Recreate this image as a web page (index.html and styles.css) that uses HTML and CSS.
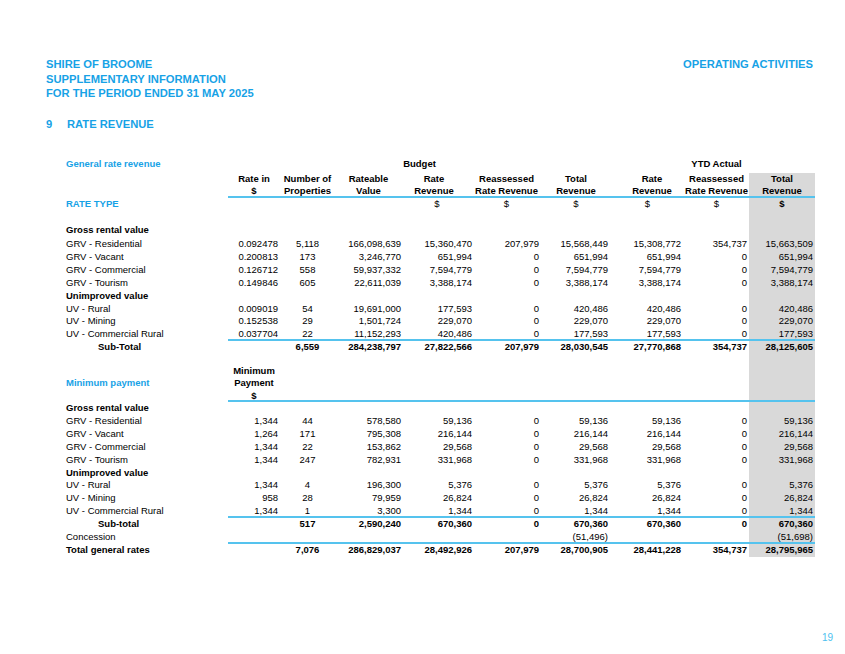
FILE: index.html
```html
<!DOCTYPE html>
<html lang="en">
<head>
<meta charset="utf-8">
<title>Shire of Broome - Rate Revenue</title>
<link rel="stylesheet" href="styles.css">
</head>
<body>
<div class="page">
  <header class="head">
    <div class="titles">
      <div>SHIRE OF BROOME</div>
      <div>SUPPLEMENTARY INFORMATION</div>
      <div>FOR THE PERIOD ENDED 31 MAY 2025</div>
    </div>
    <div class="tag">OPERATING ACTIVITIES</div>
  </header>
  <h1 class="section"><span class="num">9</span><span>RATE REVENUE</span></h1>

  <div class="table">
    <div class="row hd">
      <div class="blue">General rate revenue</div><div class="span-budget">Budget</div><div></div><div>YTD Actual</div><div></div>
    </div>
    <div class="row hd">
      <div></div><div>Rate in</div><div>Number of</div><div>Rateable</div><div>Rate</div><div>Reassessed</div><div>Total</div><div>Rate</div><div>Reassessed</div><div>Total</div>
    </div>
    <div class="row hd line">
      <div></div><div>$</div><div>Properties</div><div>Value</div><div>Revenue</div><div>Rate Revenue</div><div>Revenue</div><div>Revenue</div><div>Rate Revenue</div><div>Revenue</div>
    </div>
    <div class="row dol">
      <div class="blue">RATE TYPE</div><div></div><div></div><div></div><div>$</div><div>$</div><div>$</div><div>$</div><div>$</div><div class="b">$</div>
    </div>
    <div class="row"><div></div><div></div><div></div><div></div><div></div><div></div><div></div><div></div><div></div><div></div></div>
    <div class="row"><div class="b">Gross rental value</div><div></div><div></div><div></div><div></div><div></div><div></div><div></div><div></div><div></div></div>
    <div class="row"><div>GRV - Residential</div><div>0.092478</div><div>5,118</div><div>166,098,639</div><div>15,360,470</div><div>207,979</div><div>15,568,449</div><div>15,308,772</div><div>354,737</div><div>15,663,509</div></div>
    <div class="row"><div>GRV - Vacant</div><div>0.200813</div><div>173</div><div>3,246,770</div><div>651,994</div><div>0</div><div>651,994</div><div>651,994</div><div>0</div><div>651,994</div></div>
    <div class="row"><div>GRV - Commercial</div><div>0.126712</div><div>558</div><div>59,937,332</div><div>7,594,779</div><div>0</div><div>7,594,779</div><div>7,594,779</div><div>0</div><div>7,594,779</div></div>
    <div class="row"><div>GRV - Tourism</div><div>0.149846</div><div>605</div><div>22,611,039</div><div>3,388,174</div><div>0</div><div>3,388,174</div><div>3,388,174</div><div>0</div><div>3,388,174</div></div>
    <div class="row"><div class="b">Unimproved value</div><div></div><div></div><div></div><div></div><div></div><div></div><div></div><div></div><div></div></div>
    <div class="row"><div>UV - Rural</div><div>0.009019</div><div>54</div><div>19,691,000</div><div>177,593</div><div>0</div><div>420,486</div><div>420,486</div><div>0</div><div>420,486</div></div>
    <div class="row"><div>UV - Mining</div><div>0.152538</div><div>29</div><div>1,501,724</div><div>229,070</div><div>0</div><div>229,070</div><div>229,070</div><div>0</div><div>229,070</div></div>
    <div class="row line"><div>UV - Commercial Rural</div><div>0.037704</div><div>22</div><div>11,152,293</div><div>420,486</div><div>0</div><div>177,593</div><div>177,593</div><div>0</div><div>177,593</div></div>
    <div class="row b"><div class="sub">Sub-Total</div><div></div><div>6,559</div><div>284,238,797</div><div>27,822,566</div><div>207,979</div><div>28,030,545</div><div>27,770,868</div><div>354,737</div><div>28,125,605</div></div>
    <div class="row"><div></div><div></div><div></div><div></div><div></div><div></div><div></div><div></div><div></div><div></div></div>
    <div class="row hd"><div></div><div>Minimum</div><div></div><div></div><div></div><div></div><div></div><div></div><div></div><div></div></div>
    <div class="row hd"><div class="blue">Minimum payment</div><div>Payment</div><div></div><div></div><div></div><div></div><div></div><div></div><div></div><div></div></div>
    <div class="row hd line"><div></div><div>$</div><div></div><div></div><div></div><div></div><div></div><div></div><div></div><div></div></div>
    <div class="row"><div class="b">Gross rental value</div><div></div><div></div><div></div><div></div><div></div><div></div><div></div><div></div><div></div></div>
    <div class="row"><div>GRV - Residential</div><div>1,344</div><div>44</div><div>578,580</div><div>59,136</div><div>0</div><div>59,136</div><div>59,136</div><div>0</div><div>59,136</div></div>
    <div class="row"><div>GRV - Vacant</div><div>1,264</div><div>171</div><div>795,308</div><div>216,144</div><div>0</div><div>216,144</div><div>216,144</div><div>0</div><div>216,144</div></div>
    <div class="row"><div>GRV - Commercial</div><div>1,344</div><div>22</div><div>153,862</div><div>29,568</div><div>0</div><div>29,568</div><div>29,568</div><div>0</div><div>29,568</div></div>
    <div class="row"><div>GRV - Tourism</div><div>1,344</div><div>247</div><div>782,931</div><div>331,968</div><div>0</div><div>331,968</div><div>331,968</div><div>0</div><div>331,968</div></div>
    <div class="row"><div class="b">Unimproved value</div><div></div><div></div><div></div><div></div><div></div><div></div><div></div><div></div><div></div></div>
    <div class="row"><div>UV - Rural</div><div>1,344</div><div>4</div><div>196,300</div><div>5,376</div><div>0</div><div>5,376</div><div>5,376</div><div>0</div><div>5,376</div></div>
    <div class="row"><div>UV - Mining</div><div>958</div><div>28</div><div>79,959</div><div>26,824</div><div>0</div><div>26,824</div><div>26,824</div><div>0</div><div>26,824</div></div>
    <div class="row line"><div>UV - Commercial Rural</div><div>1,344</div><div>1</div><div>3,300</div><div>1,344</div><div>0</div><div>1,344</div><div>1,344</div><div>0</div><div>1,344</div></div>
    <div class="row b"><div class="sub">Sub-total</div><div></div><div>517</div><div>2,590,240</div><div>670,360</div><div>0</div><div>670,360</div><div>670,360</div><div>0</div><div>670,360</div></div>
    <div class="row line"><div>Concession</div><div></div><div></div><div></div><div></div><div></div><div>(51,496)</div><div></div><div></div><div>(51,698)</div></div>
    <div class="row b"><div>Total general rates</div><div></div><div>7,076</div><div>286,829,037</div><div>28,492,926</div><div>207,979</div><div>28,700,905</div><div>28,441,228</div><div>354,737</div><div>28,795,965</div></div>
  </div>

  <footer class="pageno">19</footer>
</div>
</body>
</html>
```

FILE: styles.css
```css
* { box-sizing: border-box; }

html, body {
  margin: 0;
  padding: 0;
  background: #ffffff;
}

body {
  font-family: "Liberation Sans", Arial, sans-serif;
  color: #000000;
  width: 845px;
  height: 654px;
  overflow: hidden;
}

.page {
  padding: 57px 32px 0 46px;
}

.head {
  display: flex;
  justify-content: space-between;
  align-items: flex-start;
  font-size: 11.2px;
  line-height: 14.5px;
  font-weight: bold;
  color: #17a2e6;
}

.section {
  display: flex;
  margin: 16.8px 0 0 0;
  font-size: 11.2px;
  line-height: 14.5px;
  font-weight: bold;
  color: #17a2e6;
}

.section .num {
  width: 21px;
}

.table {
  margin: 26.6px 0 0 20px;
  width: 749px;
  display: grid;
  grid-template-columns: 162px 52px 55px 67px 70px 69px 70px 73px 65px 66px;
  grid-template-rows:
    14.3px 12.7px 12.7px 13.2px 13.2px 13.2px
    13px 13px 13px 13px 13px 12.5px 12.5px 13.7px
    12px 12px 11.7px 12.6px 12.4px 13px
    12.9px 12.9px 12.9px 12.9px 12.9px 12.9px 12.9px 12.3px
    13px 13px 13.1px;
  font-size: 9.5px;
  line-height: 12.84px;
  background-image: linear-gradient(#d9d9d9, #d9d9d9);
  background-repeat: no-repeat;
  background-position: 683px 14.3px;
  background-size: 66px calc(100% - 14.3px);
}

.row {
  display: contents;
}

.row > * {
  text-align: right;
  white-space: nowrap;
  overflow: visible;
}

.row > :nth-child(1) { text-align: left; }
.row > :nth-child(2) { padding-right: 2px; }
.row > :nth-child(3) { text-align: center; }
.row > :nth-child(4) { padding-right: 1px; }
.row > :nth-child(5) { padding-right: 0; }
.row > :nth-child(6) { padding-right: 2px; }
.row > :nth-child(7) { padding-right: 3px; }
.row > :nth-child(8) { padding-right: 3px; }
.row > :nth-child(9) { padding-right: 2px; }
.row > :nth-child(10) { padding-right: 2px; }

.row.hd > * {
  text-align: center;
  font-weight: bold;
  padding: 0;
}

.row.hd > :nth-child(1) { text-align: left; }
.row.hd > :nth-child(5) { padding-right: 6px; }
.row.hd > :nth-child(8) { padding-left: 9px; }

.row.hd > .span-budget {
  grid-column: 2 / 8;
  padding: 0;
}

.row.dol > * {
  text-align: center;
  padding: 0;
}

.row.dol > :nth-child(1) { text-align: left; }

.row.line > :not(:first-child) {
  border-bottom: 2px solid #55c3ee;
}

.row.b > * { font-weight: bold; }

.b { font-weight: bold; }

.row > .blue,
.blue {
  color: #17a2e6;
  font-weight: bold;
}

.row > .sub {
  padding-left: 32px;
}

.pageno {
  margin: 74.9px -20px 0 0;
  text-align: right;
  font-size: 10px;
  line-height: 12px;
  color: #4dbfef;
}
```
